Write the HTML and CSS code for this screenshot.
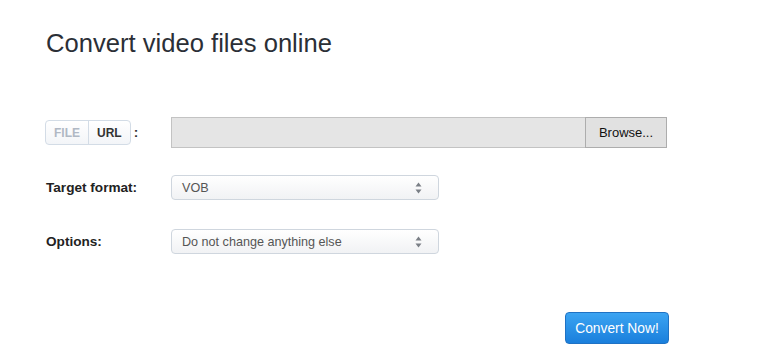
FILE: index.html
```html
<!DOCTYPE html>
<html lang="en">
<head>
    <meta charset="UTF-8">
    <meta name="viewport" content="width=device-width, initial-scale=1.0">
    <title>Convert video files online</title>
    <link rel="stylesheet" href="styles.css">
</head>
<body>
    <div class="container">
        <h1>Convert video files online</h1>
        <form class="form">
            <div class="row row-file">
                <div class="label">
                    <span class="toggle">
                        <span class="toggle-item off">FILE</span>
                        <span class="toggle-item on">URL</span>
                    </span>
                    <span class="colon">:</span>
                </div>
                <div class="file-field">
                    <span class="file-input"></span>
                    <span class="browse">Browse...</span>
                </div>
            </div>
            <div class="row row-select">
                <div class="label bold">Target format:</div>
                <div class="select">
                    <span>VOB</span>
                    <svg class="arrows" width="7" height="12" viewBox="0 0 7 12"><path d="M3.5 0.5 L6.5 4.5 L0.5 4.5 Z M0.5 7.5 L6.5 7.5 L3.5 11.5 Z"/></svg>
                </div>
            </div>
            <div class="row row-select">
                <div class="label bold">Options:</div>
                <div class="select">
                    <span>Do not change anything else</span>
                    <svg class="arrows" width="7" height="12" viewBox="0 0 7 12"><path d="M3.5 0.5 L6.5 4.5 L0.5 4.5 Z M0.5 7.5 L6.5 7.5 L3.5 11.5 Z"/></svg>
                </div>
            </div>
            <div class="actions">
                <span class="convert">Convert Now!</span>
            </div>
        </form>
    </div>
</body>
</html>
```

FILE: styles.css
```css
body {
    font-family: "Liberation Sans", Arial, sans-serif;
    background-color: #fff;
    color: #333;
    margin: 0;
    padding: 0;
}
.container {
    padding: 27px 0 0 46px;
}
h1 {
    font-size: 25.6px;
    font-weight: normal;
    color: #2b2f36;
    margin: 0;
    line-height: 32px;
}
.form {
    margin-top: 58px;
}
.row {
    display: grid;
    grid-template-columns: 125px auto;
    align-items: center;
}
.row-select {
    margin-top: 27px;
}
.row-select + .row-select {
    margin-top: 29px;
}
.label {
    font-size: 13.6px;
    display: flex;
    align-items: center;
}
.label.bold {
    font-weight: bold;
    color: #222;
}
.toggle {
    display: flex;
    margin-left: -1px;
    border: 1px solid #d3dce6;
    border-radius: 4px;
    background: linear-gradient(#fff, #f3f5f8);
    height: 23px;
    align-items: stretch;
}
.toggle-item {
    font-size: 12px;
    font-weight: bold;
    display: flex;
    align-items: center;
    padding: 0 8px;
}
.toggle-item.off {
    color: #b0b8c4;
    border-right: 1px solid #d3dce6;
}
.toggle-item.on {
    color: #333;
}
.colon {
    margin-left: 3px;
    font-weight: bold;
}
.file-field {
    display: flex;
    height: 31px;
}
.file-input {
    width: 413px;
    background-color: #e5e5e5;
    border: 1px solid #c3c3c3;
    border-right: none;
}
.browse {
    width: 80px;
    background-color: #e1e1e1;
    border: 1px solid #adadad;
    font-size: 13px;
    color: #111;
    display: flex;
    align-items: center;
    justify-content: center;
}
.select {
    box-sizing: border-box;
    width: 268px;
    height: 25px;
    border: 1px solid #cfd6de;
    border-radius: 4px;
    background: linear-gradient(#fff, #f1f2f4);
    display: flex;
    align-items: center;
    justify-content: space-between;
    padding: 0 16px 0 10px;
    font-size: 12.6px;
    color: #555;
}
.arrows {
    fill: #7a7f86;
}
.actions {
    margin-top: 58px;
    padding-left: 519px;
}
.convert {
    display: inline-flex;
    align-items: center;
    justify-content: center;
    width: 102px;
    height: 30px;
    border: 1px solid #1f72c4;
    border-radius: 4px;
    background: linear-gradient(#3ba4f2, #1a7fdc);
    color: #fff;
    font-size: 13.8px;
}
```
